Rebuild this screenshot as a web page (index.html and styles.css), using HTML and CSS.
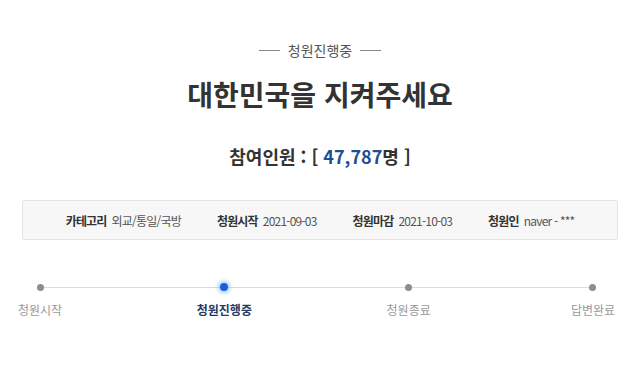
FILE: index.html
```html
<!DOCTYPE html>
<html lang="ko">
<head>
    <meta charset="UTF-8">
    <title>청원진행중</title>
    <link rel="stylesheet" href="styles.css">
</head>
<body>
    <div class="petition">
        <div class="status"><span class="dash"></span>청원진행중<span class="dash"></span></div>
        <h1 class="title">대한민국을 지켜주세요</h1>
        <div class="count">참여인원 : [ <span class="num">47,787</span>명 ]</div>

        <div class="info">
            <div class="item"><b>카테고리</b><span>외교/통일/국방</span></div>
            <div class="item"><b>청원시작</b><span>2021-09-03</span></div>
            <div class="item"><b>청원마감</b><span>2021-10-03</span></div>
            <div class="item"><b>청원인</b><span>naver - ***</span></div>
        </div>

        <!-- progress -->
        <div class="steps">
            <div class="step"><i class="dot"></i><span>청원시작</span></div>
            <div class="step on"><i class="dot"></i><span>청원진행중</span></div>
            <div class="step"><i class="dot"></i><span>청원종료</span></div>
            <div class="step"><i class="dot"></i><span>답변완료</span></div>
        </div>
    </div>
</body>
</html>
```
FILE: styles.css
```css
body {
    margin: 0;
    background: #ffffff;
    font-family: "Noto Sans CJK KR", "Noto Sans", sans-serif;
    color: #333;
}

.petition {
    width: 640px;
    padding-top: 39px;
}

.status {
    display: flex;
    justify-content: center;
    align-items: center;
    gap: 8px;
    font-size: 14px;
    line-height: 22px;
    color: #555;
}

.dash {
    width: 21px;
    height: 1px;
    background: #888;
}

.title {
    margin: 14px 0 0;
    text-align: center;
    font-size: 28px;
    line-height: 38px;
    font-weight: bold;
    color: #333;
}

.count {
    margin-top: 30px;
    text-align: center;
    font-size: 18px;
    line-height: 26px;
    font-weight: bold;
    color: #333;
}

.count .num {
    color: #1d4f94;
}

.info {
    margin: 31px 22px 0 22px;
    height: 38px;
    background: #f7f7f7;
    border: 1px solid #e2e2e2;
    border-radius: 3px;
    display: flex;
    justify-content: center;
    align-items: center;
    gap: 36px;
    font-size: 12px;
}

.item b {
    color: #333;
    margin-right: 5px;
    letter-spacing: -0.8px;
}

.item span {
    color: #555;
    letter-spacing: -0.8px;
}

.steps {
    position: relative;
    margin-top: 43px;
    padding: 0 20px;
    display: flex;
    justify-content: space-between;
}

.steps::before {
    content: "";
    position: absolute;
    left: 40px;
    right: 47px;
    top: 4px;
    height: 1px;
    background: #dcdcdc;
}

.step {
    position: relative;
    width: 40px;
    display: flex;
    flex-direction: column;
    align-items: center;
    gap: 10px;
    font-size: 12px;
    line-height: 18px;
    color: #999;
    white-space: nowrap;
}

.step:last-child {
    margin-right: 7px;
}

.dot {
    width: 7px;
    height: 7px;
    margin-top: 1px;
    border-radius: 50%;
    background: #8e8e8e;
}

.step.on span {
    color: #253a63;
    font-weight: bold;
}

.step.on .dot {
    width: 8px;
    height: 8px;
    margin-top: 0;
    background: #1564d6;
    box-shadow: 0 0 4px 2px rgba(60, 140, 240, 0.45);
}
```
